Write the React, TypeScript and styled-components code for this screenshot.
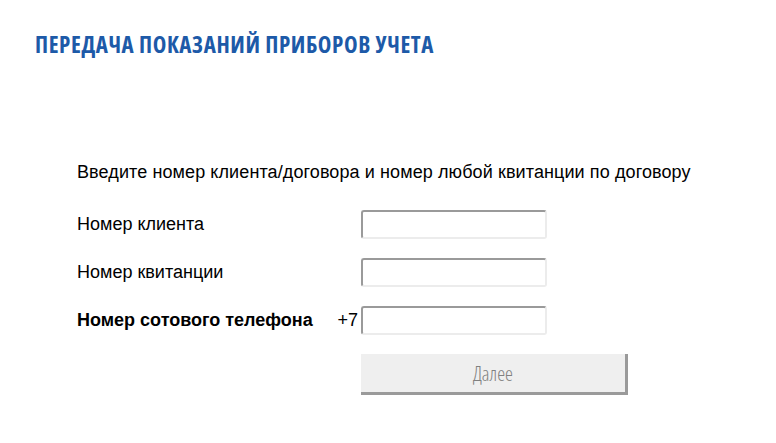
import React from "react"
import styled, { createGlobalStyle } from "styled-components"

const GlobalStyle = createGlobalStyle`
  html, body {
    margin: 0;
    padding: 0;
    background: #ffffff;
  }
  body {
    font-family: "Liberation Sans", Arial, sans-serif;
    color: #000;
  }
`

const Page = styled.main`
  width: 776px;
  height: 443px;
  box-sizing: border-box;
  padding: 29px 0 0 35px;
`

const Title = styled.h1`
  margin: 0;
  font-family: "Open Sans", "Liberation Sans Narrow", sans-serif;
  font-stretch: condensed;
  font-weight: 700;
  font-size: 23px;
  line-height: 31px;
  letter-spacing: 0.6px;
  color: #1d5aa8;
`

const Form = styled.form`
  display: flex;
  flex-direction: column;
  margin: 102px 0 0 42px;
`

const Intro = styled.p`
  margin: 0 0 27px;
  font-size: 18px;
  line-height: 21px;
  letter-spacing: 0.1px;
`

const Row = styled.div`
  display: grid;
  grid-template-columns: 284px 186px;
  align-items: center;
  height: 29px;
  margin-bottom: 19px;
`

const Label = styled.label<{ $strong?: boolean }>`
  display: flex;
  justify-content: space-between;
  padding-right: 3px;
  font-size: 18px;
  font-weight: ${(p) => (p.$strong ? 700 : 400)};
`

const Prefix = styled.span`
  font-weight: 400;
`

const Field = styled.input`
  box-sizing: border-box;
  width: 186px;
  height: 29px;
  margin: 0;
  border-style: solid;
  border-width: 2px;
  border-color: #9a9a9a #ececec #ececec #9a9a9a;
  border-radius: 3px;
  background: #fff;
  font: 16px "Liberation Sans", Arial, sans-serif;
  outline: none;
`

const Submit = styled.button`
  box-sizing: border-box;
  margin: 0 0 0 284px;
  width: 267px;
  height: 41px;
  border: none;
  border-right: 3px solid #9a9a9a;
  border-bottom: 3px solid #9a9a9a;
  background: #efefef;
  color: #808080;
  font-family: "Open Sans", "Liberation Sans Narrow", sans-serif;
  font-stretch: condensed;
  font-weight: 300;
  font-size: 20px;
  padding: 0;
  cursor: pointer;
`

export default function App() {
  return (
    <>
      <GlobalStyle />
      <Page>
        <Title>ПЕРЕДАЧА ПОКАЗАНИЙ ПРИБОРОВ УЧЕТА</Title>
        <Form onSubmit={(e) => e.preventDefault()}>
          <Intro>
            Введите номер клиента/договора и номер любой квитанции по договору
          </Intro>
          <Row>
            <Label htmlFor="client">Номер клиента</Label>
            <Field id="client" type="text" />
          </Row>
          <Row>
            <Label htmlFor="receipt">Номер квитанции</Label>
            <Field id="receipt" type="text" />
          </Row>
          <Row>
            <Label htmlFor="phone" $strong>
              Номер сотового телефона
              <Prefix>+7</Prefix>
            </Label>
            <Field id="phone" type="tel" />
          </Row>
          <Submit type="submit">Далее</Submit>
        </Form>
      </Page>
    </>
  )
}
